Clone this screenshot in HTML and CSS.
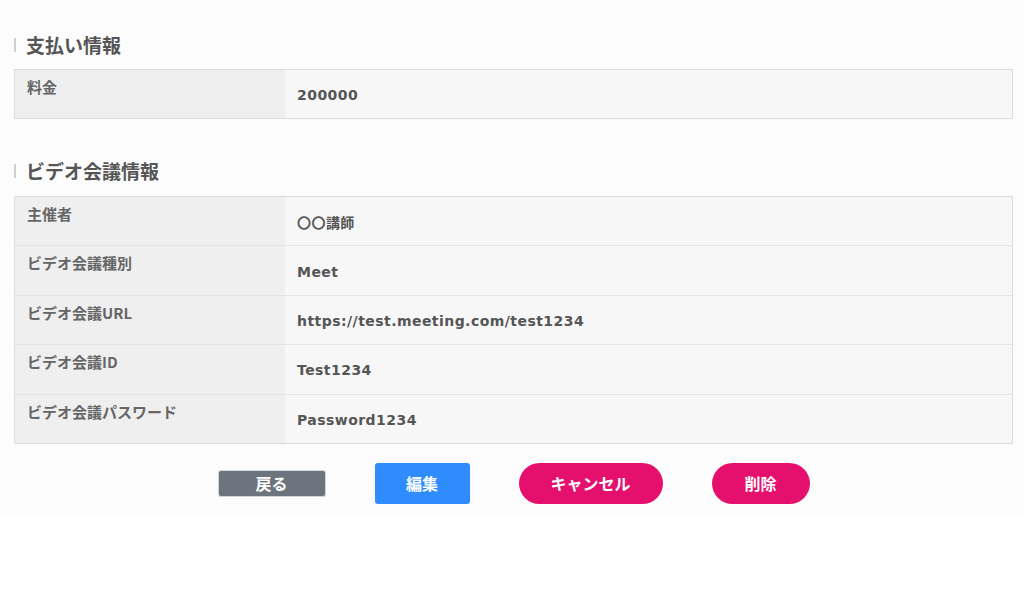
FILE: index.html
```html
<!DOCTYPE html>
<html lang="ja">
<head>
<meta charset="utf-8">
<title>詳細</title>
<link rel="stylesheet" href="styles.css">
</head>
<body>
<div class="page">
  <h2 class="section-title">支払い情報</h2>
  <div class="info-table">
    <div class="row">
      <div class="label">料金</div>
      <div class="value">200000</div>
    </div>
  </div>

  <h2 class="section-title second">ビデオ会議情報</h2>
  <div class="info-table video">
    <div class="row">
      <div class="label">主催者</div>
      <div class="value">〇〇講師</div>
    </div>
    <div class="row">
      <div class="label">ビデオ会議種別</div>
      <div class="value">Meet</div>
    </div>
    <div class="row">
      <div class="label">ビデオ会議URL</div>
      <div class="value">https://test.meeting.com/test1234</div>
    </div>
    <div class="row">
      <div class="label">ビデオ会議ID</div>
      <div class="value">Test1234</div>
    </div>
    <div class="row">
      <div class="label">ビデオ会議パスワード</div>
      <div class="value">Password1234</div>
    </div>
  </div>

  <div class="actions">
    <button class="btn btn-back">戻る</button>
    <button class="btn btn-edit">編集</button>
    <button class="btn btn-pink btn-cancel">キャンセル</button>
    <button class="btn btn-pink btn-delete">削除</button>
  </div>
</div>
</body>
</html>
```

FILE: styles.css
```css
html, body {
  margin: 0;
  padding: 0;
  background: #ffffff;
}

body {
  font-family: "DejaVu Sans", "Noto Sans CJK JP", sans-serif;
  color: #555;
}

.page {
  background: #fcfcfc;
  padding: 33px 11px 11px 14px;
}

.section-title {
  display: flex;
  align-items: center;
  gap: 10px;
  margin: 0 0 12px 0;
  height: 24px;
  font-family: "Noto Sans CJK JP", sans-serif;
  font-size: 19px;
  font-weight: 700;
  color: #555;
  line-height: 24px;
}

.section-title::before {
  content: "";
  width: 2px;
  height: 14px;
  background: #cfcfcf;
}

.section-title.second {
  margin-top: 40px;
  margin-bottom: 13px;
}

.info-table {
  border: 1px solid #dcdcdc;
}

.row {
  display: grid;
  grid-template-columns: 270px 1fr;
  height: 48px;
}

.info-table .row + .row {
  border-top: 1px solid #e4e4e4;
}

.info-table.video .row {
  height: 48.4px;
}

.label {
  background: #efefef;
  padding: 7px 12px 0 12px;
  font-family: "Noto Sans CJK JP", sans-serif;
  font-size: 15px;
  line-height: 20px;
  font-weight: 700;
  color: #666;
}

.value {
  background: #f7f7f7;
  display: flex;
  align-items: center;
  padding: 2px 12px 0 12px;
  font-size: 14px;
  font-weight: 700;
  letter-spacing: 0.45px;
  color: #555;
}

.actions {
  display: flex;
  justify-content: center;
  align-items: center;
  gap: 49px;
  margin-top: 19px;
}

.btn {
  border: none;
  color: #fff;
  font-family: "Noto Sans CJK JP", sans-serif;
  font-size: 16px;
  font-weight: 700;
  height: 41px;
  padding: 0;
  cursor: pointer;
}

.btn-back {
  width: 108px;
  height: 27px;
  background: #6c757d;
  border: 1px solid #d0d4d8;
  border-radius: 3px;
}

.btn-edit {
  width: 95px;
  background: #2e8cff;
  border-radius: 3px;
}

.btn-pink {
  background: #e5106e;
  border-radius: 21px;
}

.btn-cancel {
  width: 144px;
}

.btn-delete {
  width: 98px;
}
```
